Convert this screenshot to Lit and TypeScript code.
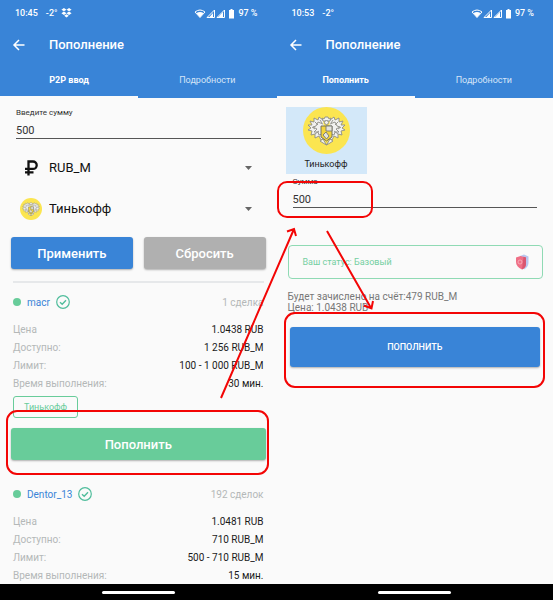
import { LitElement, html, svg, css, nothing } from "lit";
import { customElement, property } from "lit/decorators.js";

interface Offer {
  name: string;
  deals: string;
  rows: [string, string][];
  bank?: string;
}

const offers: Offer[] = [
  {
    name: "macr",
    deals: "1 сделка",
    rows: [
      ["Цена", "1.0438 RUB"],
      ["Доступно:", "1 256 RUB_M"],
      ["Лимит:", "100 - 1 000 RUB_M"],
      ["Время выполнения:", "30 мин."],
    ],
    bank: "Тинькофф",
  },
  {
    name: "Dentor_13",
    deals: "192 сделок",
    rows: [
      ["Цена", "1.0481 RUB"],
      ["Доступно:", "710 RUB_M"],
      ["Лимит:", "500 - 710 RUB_M"],
      ["Время выполнения:", "15 мин."],
    ],
  },
];

const feathers = svg`
  <path d="M20 13 L16 10 L15 13 L11 11 L11 15 L7 14 L9 18 L5 18 L8 21 L5 23 L9 24 L8 28 L12 27 L12 31 L16 29 L18 33 L22 30"/>
  <path d="M20 17 L15 15 L13 19 L10 20 L14 22 L11 25 L15 25 L16 28 L20 27"/>
  <path d="M17 13 L19 16 M12 15 L15 18 M9 20 L12 22 M12 27 L16 24"/>`;

/* Yellow disc with the bank's coat of arms. */
const crest = html`<svg class="crest" viewBox="0 0 47 47" aria-hidden="true">
  <circle cx="23.5" cy="23.5" r="23.5" fill="#fbe550" />
  <g fill="#f1f1ef" stroke="#8d8d86" stroke-width="0.900" stroke-linejoin="round">
    ${feathers}
    <g transform="matrix(-1 0 0 1 47 0)">${feathers}</g>
    <path d="M20 14 L19 11 L21 12 L22 10 L25 10 L26 12 L28 11 L27 14 Z" />
    <path d="M17 34 L20 32 L23.5 38 L27 32 L30 34 L27 36 L23.5 38 L20 36 Z" />
    <path d="M18 19 L29 19 L29 30 L23.5 34 L18 30 Z" fill="#f3d63b" stroke="#66665f" />
    <path d="M23 19 L29 19 L29 24 L23 24 Z M20 28 L23 25 L26 29 L23.5 32 Z" fill="#e4e4dd" stroke="#77776e" />
    <circle cx="23.5" cy="15.500" r="2" />
  </g>
</svg>`;

@customElement("phone-header")
class PhoneHeader extends LitElement {
  @property() time = "";
  @property() tab = "";
  @property({ type: Boolean }) dropbox = false;

  static styles = css`
    :host { display: block; background: #3984d7; color: #fff; }
    .status { display: flex; align-items: center; height: 26px; padding: 0 19px 0 15px; font-size: 9px; font-weight: 500; }
    .temp { margin-left: 8px; }
    .drop { width: 11px; height: 10px; margin-left: 4px; }
    .signals { width: 42px; height: 11px; margin-left: auto; margin-right: 2px; }
    .bar { display: flex; align-items: center; height: 37px; padding-left: 12px; gap: 23px; }
    .back { display: flex; width: 14px; height: 14px; padding: 0; border: 0; background: none; color: inherit; }
    h1 { margin: 0; font-size: 13px; font-weight: 500; }
    .tabs { display: grid; grid-template-columns: 1fr 1fr; height: 35px; }
    .tab { padding: 0; border: 0; border-bottom: 2px solid transparent; background: none; color: #d5e5f8; font: 400 9px Roboto, sans-serif; }
    .tab.active { border-color: #fafafa; color: #fff; font-weight: 700; }
  `;

  render() {
    return html`
      <div class="status">
        <span>${this.time}</span><span class="temp">-2°</span>
        ${this.dropbox
          ? html`<svg class="drop" viewBox="0 0 12 11" fill="#fff" aria-hidden="true">
              <path d="M3.200 0 6 1.900 3.200 3.700.400 1.900Z M8.800 0 11.600 1.900 8.800 3.700 6 1.900Z M3.200 3.900 6 5.800 3.200 7.600.400 5.800Z M8.800 3.900 11.600 5.800 8.800 7.600 6 5.800Z M6 6.900 8.500 8.600 6 10.400 3.500 8.600Z" />
            </svg>`
          : nothing}
        <svg class="signals" viewBox="0 0 42 11" aria-hidden="true">
          <path d="M1 4 Q6 0 11 4 L6 9.500Z" fill="none" stroke="#fff" stroke-width="1" />
          <path d="M2.500 5 Q6 2.800 9.500 5 L6 9.500Z" fill="#fff" />
          <path d="M13 9.500 L20.500 2 V9.500Z" fill="none" stroke="#fff" stroke-width="1" />
          <path d="M15 9.500 L19 5 V9.500Z" fill="#fff" />
          <path d="M23 9.500 L30.500 2 V9.500Z" fill="none" stroke="#fff" stroke-width="1" />
          <path d="M24 9.500 L29 4 V9.500Z" fill="#fff" />
          <path d="M35 2h1.500V1h2v1H40v8.500h-5Z" fill="#fff" />
        </svg>
        <span>97 %</span>
      </div>
      <div class="bar">
        <button class="back" aria-label="Назад">
          <svg viewBox="0 0 14 14" fill="none" stroke="#fff" stroke-width="1.500">
            <path d="M12.500 7H2.500M7 2 2 7l5 5" />
          </svg>
        </button>
        <h1>Пополнение</h1>
      </div>
      <div class="tabs">
        <button class="tab active">${this.tab}</button>
        <button class="tab">Подробности</button>
      </div>
    `;
  }
}

@customElement("app-root")
class AppRoot extends LitElement {
  static styles = css`
    :host { display: block; font-family: Roboto, "Noto Sans", sans-serif; font-size: 10px; color: #202020; }
    * { box-sizing: border-box; }
    button, input, select { font-family: inherit; }
    .page { position: relative; display: grid; grid-template-columns: 1fr 1fr; grid-template-rows: 100vh; background: #fafafa; }
    .phone { display: flex; flex-direction: column; min-width: 0; }
    .content { flex: 1; min-height: 0; overflow: hidden; }
    .nav { display: flex; justify-content: center; align-items: center; height: 16px; background: #000; }
    .pill { width: 73px; height: 3px; border-radius: 2px; background: #fff; }

    .field { display: flex; flex-direction: column; margin: 0 16px; }
    .label { font-size: 8px; line-height: 12px; color: #333; }
    .input { height: 20px; width: 100%; padding: 4px 0 0; border: 0; border-bottom: 1px solid #555; border-radius: 0; background: none; font-size: 11px; color: #333; outline: none; }
    .first { padding-top: 9px; }
    .choice { display: flex; align-items: center; height: 41px; padding: 0 25px 0 20px; gap: 7px; }
    .choices { padding-top: 8px; }
    .icon { display: flex; justify-content: center; align-items: center; width: 22px; height: 22px; flex: none; }
    .crest { display: block; width: 100%; height: 100%; }
    .select { flex: 1; min-width: 0; height: 24px; padding: 0; border: 0; appearance: none; background: none; font-size: 13px; color: #111; }
    .caret { width: 7px; height: 4px; }
    .pair { display: grid; grid-template-columns: 1fr 1fr; gap: 11px; padding: 8px 11px 0; }
    .btn { height: 32px; padding: 0; border: 0; border-radius: 3px; color: #fff; font-size: 13px; font-weight: 500; box-shadow: 0 1px 2px rgba(0, 0, 0, 0.3); }
    .blue { background: #3984d7; }
    .grey { background: #b0b0b0; }
    .green { background: #68cc9a; display: block; width: 100%; }
    .rule { height: 2px; margin: 12px 13px 0; border: 0; background: #e6e8ea; }

    .offer { padding: 10px 13px 0; }
    .head { display: flex; align-items: center; height: 18px; font-size: 10px; }
    .dot { width: 8px; height: 8px; border-radius: 50%; background: #68cc9a; }
    .name { margin: 0 6px; color: #3984d7; text-decoration: none; }
    .check { width: 14px; height: 14px; }
    .deals { margin-left: auto; color: #b4b8b8; }
    .facts { margin: 10px 0 0; }
    .fact { display: flex; justify-content: space-between; line-height: 18px; }
    dt { color: #b4b8b8; }
    dd { margin: 0; color: #1a1a1a; }
    .chip { display: inline-flex; align-items: center; height: 22px; margin-top: 3px; padding: 0 10px; border: 1px solid #68cc9a; border-radius: 3px; color: #68cc9a; font-size: 9px; vertical-align: top; }
    .action { margin: 10px -2px 15px; }

    .bank { display: flex; flex-direction: column; align-items: center; width: 81px; height: 67px; margin: 9px 0 2px 9px; background: #d3e8f9; }
    .logo { width: 47px; height: 47px; }
    .caption { font-size: 9px; line-height: 20px; color: #222; }
    .tier { display: flex; justify-content: space-between; align-items: center; height: 34px; margin: 37px 10px 0 11px; padding: 0 13px 0 14px; border: 1px solid #8fdab4; border-radius: 4px; color: #74cfa1; font-size: 9px; }
    .shield { width: 14px; height: 16px; }
    .sum { margin: 12px 11px 0; line-height: 11px; color: #777; }
    .submit { padding: 14px 13px 0; }
    .big { display: block; width: 100%; height: 40px; font-size: 9px; }
    .marks { position: absolute; inset: 0; width: 100%; height: 100%; pointer-events: none; fill: none; stroke: #f30505; stroke-width: 2; }
  `;

  private caret = html`<svg class="caret" viewBox="0 0 7 4" aria-hidden="true"><path d="M0 0h7L3.500 4Z" fill="#666" /></svg>`;

  private offer(o: Offer) {
    return html`<section class="offer">
      <div class="head">
        <span class="dot"></span>
        <a class="name" href="#">${o.name}</a>
        <svg class="check" viewBox="0 0 14 14" fill="none" stroke="#50bd9c" aria-hidden="true">
          <circle cx="7" cy="7" r="6.300" stroke-width="1.200" />
          <path d="M4 7.200 6.200 9.200 10 5.200" stroke-width="1.400" />
        </svg>
        <span class="deals">${o.deals}</span>
      </div>
      <dl class="facts">
        ${o.rows.map(([k, v]) => html`<div class="fact"><dt>${k}</dt><dd>${v}</dd></div>`)}
      </dl>
      ${o.bank
        ? html`<span class="chip">${o.bank}</span>
            <div class="action"><button class="btn green">Пополнить</button></div>`
        : nothing}
    </section>`;
  }

  render() {
    return html`<main class="page">
      <div class="phone">
        <phone-header time="10:45" tab="P2P ввод" dropbox></phone-header>
        <div class="content">
          <div class="field first">
            <label class="label" for="amount">Введите сумму</label>
            <input class="input" id="amount" value="500" />
          </div>
          <div class="choices">
            <div class="choice">
              <span class="icon">
                <svg width="14" height="16" viewBox="0 0 14 16" fill="none" stroke="#111" stroke-width="2.300" aria-hidden="true">
                  <path d="M4.500 15.500V1.500h4.500a3.700 3.700 0 0 1 0 7.400H1M1 12.300h8.500" />
                </svg>
              </span>
              <select class="select" aria-label="Валюта"><option>RUB_M</option></select>
              ${this.caret}
            </div>
            <div class="choice">
              <span class="icon">${crest}</span>
              <select class="select" aria-label="Банк"><option>Тинькофф</option></select>
              ${this.caret}
            </div>
          </div>
          <div class="pair">
            <button class="btn blue">Применить</button>
            <button class="btn grey">Сбросить</button>
          </div>
          <hr class="rule" />
          ${offers.map((o) => this.offer(o))}
        </div>
        <div class="nav"><span class="pill"></span></div>
      </div>

      <div class="phone">
        <phone-header time="10:53" tab="Пополнить"></phone-header>
        <div class="content">
          <div class="bank">
            <span class="logo">${crest}</span>
            <span class="caption">Тинькофф</span>
          </div>
          <div class="field">
            <label class="label" for="sum">Сумма</label>
            <input class="input" id="sum" value="500" />
          </div>
          <div class="tier">
            <span>Ваш статус: Базовый</span>
            <svg class="shield" viewBox="0 0 14 16" aria-hidden="true">
              <path d="M5 2 9 .500l4.500 2V9c0 3-2 5-4.500 6.500Z" fill="#b9c6ee" />
              <path d="M1 3.500 5.500 2 11 3.500V10c0 2.500-1.500 4.500-4 5.500C3 14 1 11 1 8Z" fill="#ef6f86" />
              <path d="M7 15.500c2.500-1 4-3 4-5.500V3.500L8.500 2.800Z" fill="#d9566f" />
              <circle cx="5" cy="8" r="2" fill="none" stroke="#f9b6c1" stroke-width="0.800" />
            </svg>
          </div>
          <div class="sum">
            <div>Будет зачислено на счёт:479 RUB_M</div>
            <div>Цена: 1.0438 RUB</div>
          </div>
          <div class="submit"><button class="btn blue big">ПОПОЛНИТЬ</button></div>
        </div>
        <div class="nav"><span class="pill"></span></div>
      </div>

      <svg class="marks" viewBox="0 0 553 600" preserveAspectRatio="none" aria-hidden="true">
        <rect x="7" y="411" width="261" height="63" rx="10" />
        <rect x="278" y="182" width="94" height="35" rx="9" />
        <rect x="285" y="313" width="259" height="74" rx="10" />
        <path d="M221 398 294 229M287 231.500 294 229 296 236" />
        <path d="M327 231 371 308M364 305.500 371.500 308.500 373 301" />
      </svg>
    </main>`;
  }
}
